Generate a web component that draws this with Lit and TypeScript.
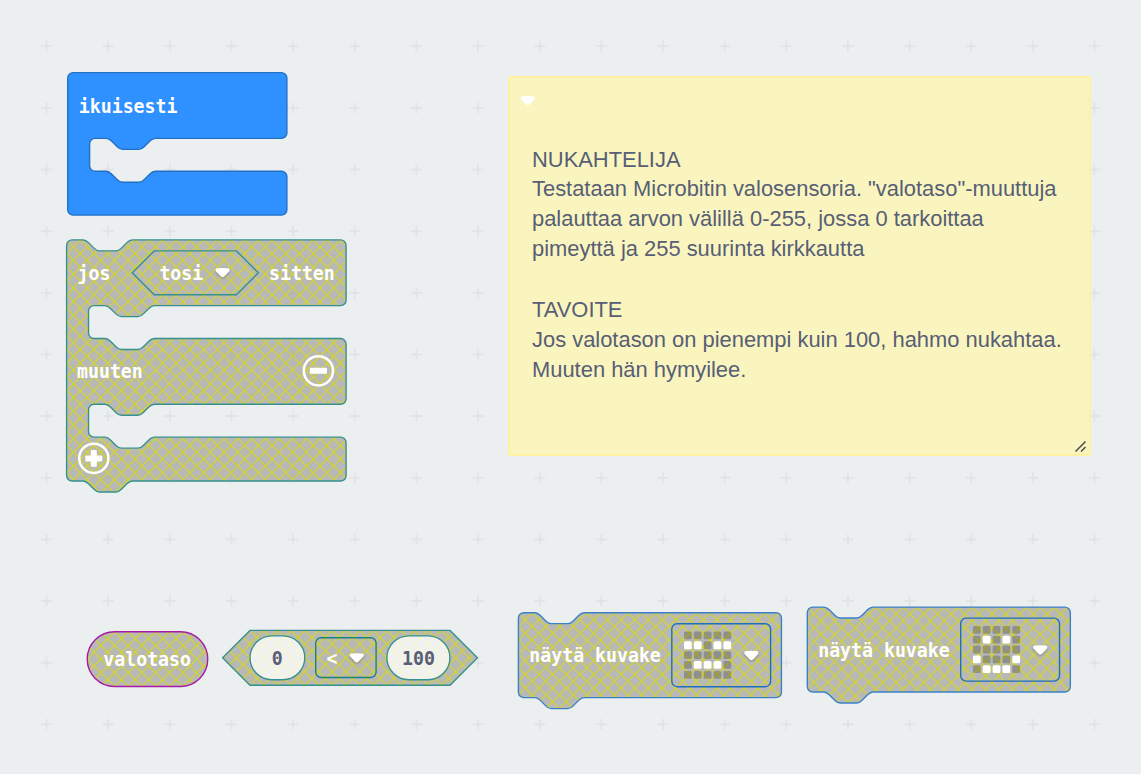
import { LitElement, html, svg, css } from "lit";
import { customElement } from "lit/decorators.js";

const SCALE = 1.37;

// Connector notches, drawn left-to-right and right-to-left.
const NOTCH = "c2,0 3,1 4,2 l4,4 c1,1 2,2 4,2 h12 c2,0 3,-1 4,-2 l4,-4 c1,-1 2,-2 4,-2";
const NOTCH_BACK = "c-2,0 -3,1 -4,2 l-4,4 c-1,1 -2,2 -4,2 h-12 c-2,0 -3,-1 -4,-2 l-4,-4 c-1,-1 -2,-2 -4,-2";
const MOUTH = `H64 ${NOTCH_BACK} h-8 a4,4 0 0 0 -4,4 v16 a4,4 0 0 0 4,4 h8 ${NOTCH}`;

const arm = (right: number, inner: number) =>
  `H${right - 4} a4,4 0 0 1 4,4 v${inner} a4,4 0 0 1 -4,4`;

const FOREVER = `M0,4 a4,4 0 0 1 4,-4 ${arm(160, 40)} ${MOUTH} ${arm(160, 24)} H4 a4,4 0 0 1 -4,-4 z`;
const IF_ELSE = `M0,4 a4,4 0 0 1 4,-4 h8 ${NOTCH} ${arm(204, 40)} ${MOUTH} ${arm(204, 40)} ${MOUTH} ${arm(204, 24)} H48 ${NOTCH_BACK} H4 a4,4 0 0 1 -4,-4 z`;
const STATEMENT = `M0,4 a4,4 0 0 1 4,-4 h8 ${NOTCH} ${arm(192, 54)} H48 ${NOTCH_BACK} H4 a4,4 0 0 1 -4,-4 z`;

// Diagonals every 10 units across one large tile, so that few tile seams fall inside a block.
const TILE = 240;
const HATCH = Array.from({ length: (2 * TILE) / 10 + 1 }, (_, i) => i * 10)
  .map((k) => `M${k - TILE},0 l${TILE},${TILE} M${k},0 l${-TILE},${TILE}`)
  .join(" ");

const hexagon = (w: number, h: number) =>
  `M${h / 2},0 H${w - h / 2} l${h / 2},${h / 2} l${-h / 2},${h / 2} H${h / 2} L0,${h / 2} z`;
const pill = (w: number, h: number) =>
  `M${h / 2},0 H${w - h / 2} a${h / 2},${h / 2} 0 0 1 0,${h} H${h / 2} a${h / 2},${h / 2} 0 0 1 0,${-h} z`;

const shape = (x: number, y: number, d: string, cls: string) =>
  svg`<path class=${cls} d=${d} transform="translate(${x} ${y}) scale(${SCALE})"></path>`;

const label = (x: number, y: number, value: string, cls = "label") =>
  svg`<text class=${cls} x=${x} y=${y} textLength=${value.length * 10.96} lengthAdjust="spacingAndGlyphs">${value}</text>`;

const caret = (x: number, y: number, shadow = true) =>
  svg`<path class="caret ${shadow ? "shadow" : ""}" transform="translate(${x} ${y})"
    d="M1.6,0.2 Q7.2,-0.3 12.8,0.2 Q14.3,0.5 14.3,2 Q14.3,3 13.3,3.9 L8.8,8.6 Q7.2,10 5.6,8.6 L1.1,3.9 Q0,3 0,2 Q0.1,0.5 1.6,0.2 z"></path>`;

const ASLEEP = [".....", "##.##", ".....", ".###.", "....."];
const HAPPY = [".....", ".#.#.", ".....", "#...#", ".###."];

const leds = (x: number, y: number, rows: string[]) =>
  rows.map((row, r) =>
    [...row].map(
      (c, i) => svg`<rect class=${c === "#" ? "led on" : "led"} x=${x + i * 9.85} y=${y + r * 9.85}
        width="7.8" height="7.8" rx="1.5"></rect>`
    )
  );

const iconBlock = (x: number, y: number, rows: string[]) => svg`
  <g transform="translate(${x} ${y})">
    ${shape(0, 0, STATEMENT, "block basic")}
    ${label(10.9, 49.6, "näytä kuvake")}
    <rect class="field basic-field" x="153.4" y="11" width="98.8" height="63" rx="5.4"></rect>
    ${leds(165.6, 18.8, rows)}
    ${caret(225.8, 38.2)}
  </g>`;

const NOTE = [
  "NUKAHTELIJA",
  'Testataan Microbitin valosensoria. "valotaso"-muuttuja palauttaa arvon välillä 0-255, jossa 0 tarkoittaa pimeyttä ja 255 suurinta kirkkautta',
  "",
  "TAVOITE",
  "Jos valotason on pienempi kuin 100, hahmo nukahtaa. Muuten hän hymyilee.",
];

@customElement("workspace-note")
class WorkspaceNote extends LitElement {
  static styles = css`
    :host {
      display: block;
      box-sizing: border-box;
      padding: 66.5px 22px 0 22px;
      background: #faf5bf;
      border: 2px solid #fcf2a0;
      border-radius: 2px;
      font-family: "Liberation Sans", Arial, sans-serif;
      font-size: 21.92px;
      line-height: 30px;
      color: #575e75;
    }
    p { margin: 0; }
    p:first-of-type { margin-bottom: -1px; }
    p:empty { min-height: 31px; }
    .overlay { position: absolute; inset: -2px; width: 583px; height: 381px; }
    .caret { fill: #fff; }
    .grip { stroke: #4b4e4c; stroke-width: 1.5; fill: none; }
  `;
  render() {
    return html`
      ${NOTE.map((line) => (line ? html`<p>${line}</p>` : html`<p></p>`))}
      <svg class="overlay">
        ${caret(12.6, 20, false)}
        <path class="grip" d="M567.5,375.5 L577.5,365.5 M573,375.5 L577.5,371"></path>
      </svg>`;
  }
}

@customElement("app-root")
class AppRoot extends LitElement {
  static styles = css`
    :host {
      display: block;
      position: relative;
      width: 1141px;
      height: 774px;
      overflow: hidden;
      background: #ebeff0;
    }
    .workspace { display: block; width: 1141px; height: 774px; }
    .plus { stroke: #dde1e2; stroke-width: 1.37; }
    .hatch-bg { fill: #aaa; }
    .hatch-line { stroke: #cc0; stroke-width: 0.95; fill: none; }
    .block { stroke-width: 1; fill: url(#hatch); fill-opacity: 0.8; }
    .forever { fill: #2f90ff; fill-opacity: 1; stroke: #2270c4; }
    .logic { stroke: #369090; }
    .sensor { stroke: #a61ba6; }
    .basic { stroke: #3a80c8; }
    .number { fill: #fff; }
    .nested { fill: none; }
    .field { fill: none; stroke-width: 1.37; }
    .logic-field { stroke: #1b8080; }
    .basic-field { stroke: #1e6fc0; }
    .label, .value {
      font-family: "DejaVu Sans Mono", monospace;
      font-weight: 700;
      font-size: 20.1px;
      fill: #fff;
    }
    .value { fill: #575e75; }
    .caret { fill: #fff; }
    .shadow { filter: drop-shadow(0 1px 1px rgba(0, 0, 0, 0.3)); }
    .ring { fill: none; stroke: #fff; stroke-width: 2.5; }
    .sign { fill: #fff; }
    .led { fill: #000; fill-opacity: 0.22; }
    .led.on { fill: #fff; fill-opacity: 1; }
    .note { position: absolute; left: 508px; top: 76px; width: 583px; height: 380px; }
  `;
  render() {
    return html`
      <svg class="workspace" viewBox="0 0 1141 774">
        <defs>
          <pattern id="grid" patternUnits="userSpaceOnUse" x="15.7" y="15.4" width="61.65" height="61.65">
            <path class="plus" d="M25.3,30.8 H36.3 M30.8,25.3 V36.3"></path>
          </pattern>
          <pattern id="hatch" patternUnits="userSpaceOnUse" x="-10" y="-10" width=${TILE} height=${TILE}>
            <rect class="hatch-bg" width=${TILE} height=${TILE}></rect>
            <path class="hatch-line" d=${HATCH}></path>
          </pattern>
        </defs>
        <rect width="1141" height="774" fill="url(#grid)"></rect>

        ${shape(67.7, 72.6, FOREVER, "block forever")}
        ${label(78.8, 112.8, "ikuisesti")}

        ${shape(66.6, 239.9, IF_ELSE, "block logic")}
        ${label(77.6, 279.8, "jos")}
        ${shape(132.3, 250.9, hexagon(92, 32), "block logic nested")}
        ${label(159.4, 279.8, "tosi")}
        ${caret(215.4, 268)}
        ${label(269, 279.8, "sitten")}
        ${label(77, 377.8, "muuten")}
        <circle class="ring" cx="318.4" cy="370.8" r="14.6"></circle>
        <rect class="sign" x="309.8" y="367.8" width="17.2" height="6" rx="1"></rect>
        <circle class="ring" cx="93.8" cy="458.3" r="14.6"></circle>
        <path class="sign" d="M91.8,450 h4 a1,1 0 0 1 1,1 v4.4 h4.5 a1,1 0 0 1 1,1 v4 a1,1 0 0 1 -1,1 h-4.5 v4.4 a1,1 0 0 1 -1,1 h-4 a1,1 0 0 1 -1,-1 v-4.4 h-4.5 a1,1 0 0 1 -1,-1 v-4 a1,1 0 0 1 1,-1 h4.5 v-4.4 a1,1 0 0 1 1,-1 z"></path>

        ${shape(87.2, 631.7, pill(88, 40), "block sensor")}
        ${label(103.3, 665.8, "valotaso")}

        ${shape(222.6, 630.4, hexagon(186, 40), "block logic")}
        ${shape(250, 635.9, pill(40, 32), "block logic number")}
        ${label(271.8, 665.2, "0", "value")}
        <rect class="field logic-field" x="315.7" y="637.7" width="60.4" height="39.8" rx="5.4"></rect>
        ${label(326.6, 665.2, "<")}
        ${caret(349.6, 653.2)}
        ${shape(386.9, 635.9, pill(46, 32), "block logic number")}
        ${label(402, 665.2, "100", "value")}

        ${iconBlock(518.4, 612.7, ASLEEP)}
        ${iconBlock(807.3, 607.1, HAPPY)}
      </svg>
      <workspace-note class="note"></workspace-note>`;
  }
}
